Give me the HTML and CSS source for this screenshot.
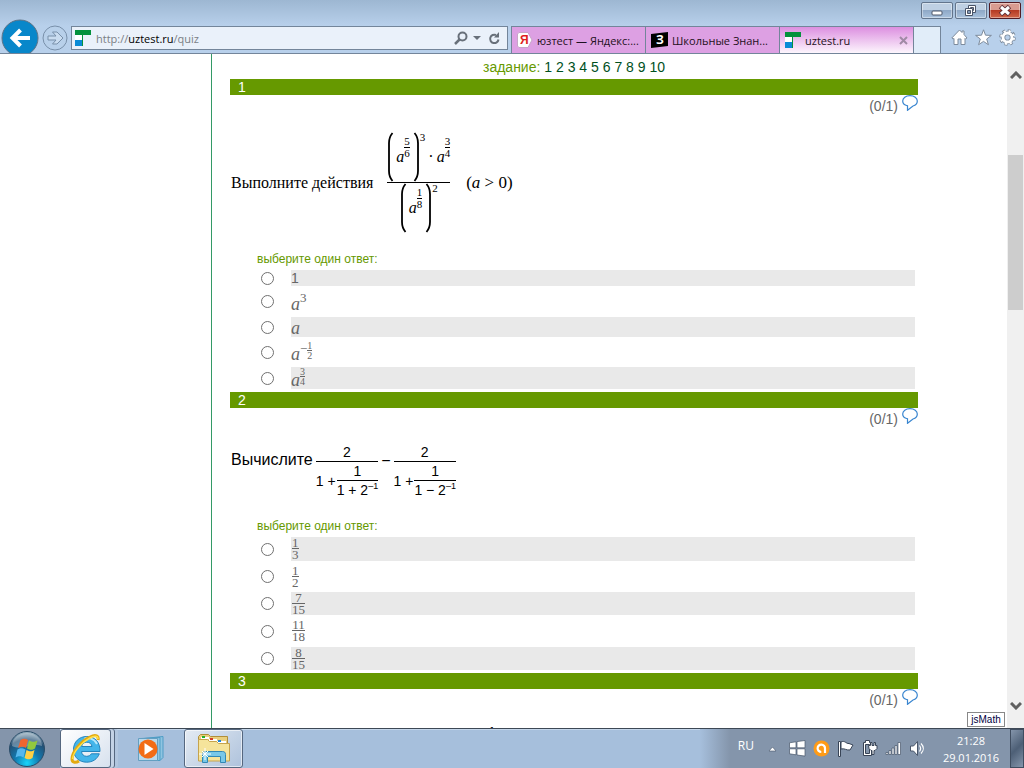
FILE: index.html
```html
<!DOCTYPE html>
<html lang="ru">
<head>
    <meta charset="UTF-8">
    <meta name="viewport" content="width=device-width, initial-scale=1.0">
    <title>uztest.ru</title>
    <link rel="stylesheet" href="styles.css">
</head>
<body>
    <svg class="defs" aria-hidden="true">
        <defs>
            <symbol id="uztest" viewBox="0 0 16 16">
                <path fill="#fff" d="M0 0h16v5H8v11H0z"/>
                <path fill="#04913c" d="M0 0h16v5H0zM7 5h1v11H7z"/>
                <path fill="#0a8bd6" d="M0 10h7v6H0z"/>
            </symbol>
            <symbol id="bubble" viewBox="0 0 16 16">
                <path fill="#fff" stroke="#3a86d0" stroke-width="1.2" d="M4.500 10.500C2 9.700 .7 8 .7 6 .7 3 3.800 .7 8 .7s7.300 2.300 7.300 5.300c0 2.500-1.600 4.300-4.300 5L5.500 15.300V10.800z"/>
            </symbol>
            <symbol id="paren" viewBox="0 0 7 50" preserveAspectRatio="none">
                <path fill="none" stroke="#000" stroke-width="1.800" d="M5.500 1C3 4 2 7 2 11v28c0 4 1 7 3.500 10"/>
            </symbol>
        </defs>
    </svg>

    <!-- Окно браузера -->
    <header class="browser">
        <div class="titlebar">
            <button class="win" aria-label="Свернуть"><svg width="30" height="16"><rect x="10" y="8" width="10" height="4" rx="1" fill="#fff" stroke="#4b5568"/></svg></button>
            <button class="win" aria-label="Восстановить"><svg width="30" height="16" fill="#fff" stroke="#4b5568"><path d="M12.500 2.500h7v7h-7zM14.500 4.500h3v3h-3z"/><path d="M9.500 5.500h7v7h-7z"/><path fill="#8198b5" d="M11.500 7.500h3v3h-3z"/></svg></button>
            <button class="win close" aria-label="Закрыть"><svg width="30" height="16"><path d="M10.500 3.500l9 8M19.500 3.500l-9 8" stroke="#5b2b33" stroke-width="5"/><path d="M11 4l8 7M19 4l-8 7" stroke="#fff" stroke-width="3"/></svg></button>
        </div>
        <div class="navbar">
            <button class="back" aria-label="Назад">
                <svg width="38" height="38" viewBox="0 0 38 38"><circle cx="19" cy="19" r="18" fill="#0887ca" stroke="#5e7387"/><path d="M29 19H13M19.500 11L11.500 19l8 8" fill="none" stroke="#fff" stroke-width="4"/></svg>
            </button>
            <button class="forward" aria-label="Вперёд">
                <svg width="26" height="26" viewBox="0 0 26 26"><circle cx="13" cy="13" r="12" fill="#b8d0ea" stroke="#7990aa"/><path d="M6 11h8l-3.500-4h4.500l6 6-6 6h-4.500l3.500-4H6z" fill="#c9dcf0" stroke="#7990aa"/></svg>
            </button>
            <div class="address">
                <svg width="16" height="16"><use href="#uztest"/></svg>
                <div class="url" role="textbox" aria-label="Адрес" contenteditable="true" spellcheck="false">http://<b>uztest.ru</b>/quiz</div>
                <button aria-label="Поиск"><svg width="14" height="14" fill="none" stroke="#68707a"><circle cx="8.500" cy="5.500" r="4" stroke-width="2"/><path d="M5.500 8.500L1 13" stroke-width="2.500"/></svg></button>
                <button aria-label="Показать список"><svg width="8" height="5"><path fill="#68707a" d="M0 0h8L4 4z"/></svg></button>
                <button class="reload" aria-label="Обновить"><svg width="13" height="13" viewBox="0 0 13 13"><path d="M10.500 7.500a4.200 4.200 0 1 1-2.500-4.500" fill="none" stroke="#68707a" stroke-width="2"/><path fill="#68707a" d="M6 5.500h5V0z"/></svg></button>
            </div>
            <nav class="tabs">
                <a class="tab" href="#">
                    <svg width="16" height="16"><path fill="#fff" stroke="#c6a5c8" d="M2 .5h9l4 7.500-4 7.500H2L.5 14V2z"/><text x="3" y="12" class="ya">Я</text></svg>
                    <span>юзтест — Яндекс:...</span>
                </a>
                <a class="tab" href="#">
                    <svg width="17" height="16"><path d="M0 2L17 0v14L0 16z"/><text x="5" y="12" class="zn">З</text></svg>
                    <span>Школьные Знан...</span>
                </a>
                <a class="tab active" href="#">
                    <svg width="16" height="16"><use href="#uztest"/></svg>
                    <span>uztest.ru</span>
                    <svg class="x" width="9" height="9"><path d="M1 1l7 7M8 1L1 8" stroke="#a08aa5" stroke-width="2"/></svg>
                </a>
                <button class="newtab" aria-label="Новая вкладка"></button>
            </nav>
            <div class="tools">
                <button aria-label="Домой"><svg width="17" height="17" viewBox="0 0 17 17"><path fill="#fff" stroke="#7d8b9c" d="M.8 9L8.500 1l2.500 2.500V2h2v3.500L16 9l-1.500 1-.5-.5V15.500h-4V10H7v5.500H3V9.500l-1 .5z"/></svg></button>
                <button aria-label="Избранное"><svg width="17" height="17" viewBox="0 0 17 17"><path fill="#fff" stroke="#7d8b9c" d="M8.500 .8l2 5.400 5.900.2-4.700 3.600 1.700 5.700-4.900-3.300-4.900 3.300L5.300 10 .6 6.400l5.900-.2z"/></svg></button>
                <button aria-label="Сервис"><svg width="17" height="17" viewBox="0 0 17 17"><circle cx="8.500" cy="8.500" r="6.800" fill="none" stroke="#7d8b9c" stroke-width="3" stroke-dasharray="3 2.340"/><circle cx="8.500" cy="8.500" r="4.500" fill="none" stroke="#7d8b9c" stroke-width="4.500"/><circle cx="8.500" cy="8.500" r="6.500" fill="none" stroke="#fff" stroke-width="2" stroke-dasharray="2.100 3" stroke-dashoffset="-.4"/><circle cx="8.500" cy="8.500" r="4.500" fill="none" stroke="#fff" stroke-width="2.800"/></svg></button>
            </div>
        </div>
    </header>

    <!-- Страница теста -->
    <div class="page">
        <aside class="side"></aside>
        <main class="quiz">
            <nav class="tasks">задание:
                <a href="#q1">1</a> <a href="#q2">2</a> <a href="#q3">3</a> <a href="#q4">4</a> <a href="#q5">5</a> <a href="#q6">6</a> <a href="#q7">7</a> <a href="#q8">8</a> <a href="#q9">9</a> <a href="#q10">10</a>
            </nav>

            <section id="q1">
                <h2>1</h2>
                <div class="score">(0/1) <svg width="16" height="16"><use href="#bubble"/></svg></div>
                <div class="formula serif">
                    <span class="words">Выполните действия</span>
                    <span class="frac main">
                        <span class="term top">
                            <svg width="7" height="50"><use href="#paren"/></svg>
                            <i>a</i>
                            <span class="frac small"><span>5</span><span>6</span></span>
                            <svg class="flip" width="7" height="50"><use href="#paren"/></svg>
                            <span class="exp">3</span>
                            <span class="dot">·</span>
                            <i>a</i>
                            <span class="frac small"><span>3</span><span>4</span></span>
                        </span>
                        <span class="term">
                            <svg width="7" height="50"><use href="#paren"/></svg>
                            <i>a</i>
                            <span class="frac small"><span>1</span><span>8</span></span>
                            <svg class="flip" width="7" height="50"><use href="#paren"/></svg>
                            <span class="exp">2</span>
                        </span>
                    </span>
                    <span class="cond">(<i>a</i> &gt; 0)</span>
                </div>
                <p class="hint">выберите один ответ:</p>
                <ul class="answers">
                    <li class="h16"><input type="radio" name="q1" id="q1a"><label for="q1a">1</label></li>
                    <li class="h23"><input type="radio" name="q1" id="q1b"><label for="q1b" class="math"><i>a</i><span class="pow">3</span></label></li>
                    <li class="h20"><input type="radio" name="q1" id="q1c"><label for="q1c" class="math"><i>a</i></label></li>
                    <li class="h22"><input type="radio" name="q1" id="q1d"><label for="q1d" class="math"><i>a</i><span class="pow">−</span><span class="frac tiny"><span>1</span><span>2</span></span></label></li>
                    <li class="h22"><input type="radio" name="q1" id="q1e"><label for="q1e" class="math"><i>a</i><span class="frac tiny"><span>3</span><span>4</span></span></label></li>
                </ul>
            </section>

            <section id="q2">
                <h2>2</h2>
                <div class="score">(0/1) <svg width="16" height="16"><use href="#bubble"/></svg></div>
                <div class="formula sans">
                    <span class="words">Вычислите</span>
                    <span class="frac wide">
                        <span>2</span>
                        <span class="sum">1 + <span class="frac inner"><span>1</span><span>1 + 2<sup>–1</sup></span></span></span>
                    </span>
                    <span class="minus">−</span>
                    <span class="frac wide">
                        <span>2</span>
                        <span class="sum">1 + <span class="frac inner"><span>1</span><span>1 − 2<sup>–1</sup></span></span></span>
                    </span>
                </div>
                <p class="hint">выберите один ответ:</p>
                <ul class="answers">
                    <li class="h24"><input type="radio" name="q2" id="q2a"><label for="q2a" class="math"><span class="frac answer"><span>1</span><span>3</span></span></label></li>
                    <li class="h23"><input type="radio" name="q2" id="q2b"><label for="q2b" class="math"><span class="frac answer"><span>1</span><span>2</span></span></label></li>
                    <li class="h23"><input type="radio" name="q2" id="q2c"><label for="q2c" class="math"><span class="frac answer"><span>7</span><span>15</span></span></label></li>
                    <li class="h24"><input type="radio" name="q2" id="q2d"><label for="q2d" class="math"><span class="frac answer"><span>11</span><span>18</span></span></label></li>
                    <li class="h23"><input type="radio" name="q2" id="q2e"><label for="q2e" class="math"><span class="frac answer"><span>8</span><span>15</span></span></label></li>
                </ul>
            </section>

            <section id="q3">
                <h2>3</h2>
                <div class="score">(0/1) <svg width="16" height="16"><use href="#bubble"/></svg></div>
                <div class="formula next">1</div>
            </section>
        </main>
        <div class="scrollbar">
            <svg width="12" height="8"><path d="M1 7l5-5 5 5" fill="none" stroke="#606060" stroke-width="3"/></svg>
            <div class="thumb"></div>
            <svg width="12" height="8"><path d="M1 1l5 5 5-5" fill="none" stroke="#606060" stroke-width="3"/></svg>
        </div>
        <button class="jsmath">jsMath</button>
    </div>

    <!-- Панель задач -->
    <footer class="taskbar">
        <button class="start" aria-label="Пуск">
            <svg width="38" height="38" viewBox="0 0 38 38">
                <defs><radialGradient id="orb" cx=".5" cy=".9" r=".9"><stop offset="0" stop-color="#19d5fa"/><stop offset=".4" stop-color="#1278ae"/><stop offset=".75" stop-color="#245074"/><stop offset="1" stop-color="#a9bfcc"/></radialGradient></defs>
                <circle cx="19" cy="19" r="17.500" fill="url(#orb)" stroke="#294c68"/>
                <path d="M4 16a15 13 0 0 1 30 0c-9-4-20 5-30 0z" fill="#fff" opacity=".3"/>
                <path fill="#ee6530" d="M12.500 10c3-2 5-1.500 7.500 0l-2 8c-3-2-5-1.500-8 0z"/>
                <path fill="#91c83e" d="M21 10.500c3 1.500 5 2 8.500 0l-2.500 8c-3 2-5 1.500-8 0z"/>
                <path fill="#55b7ed" d="M9.500 19.500c3-2 5-1.500 8 0l-2 8c-3-2-5-1.500-8 0z"/>
                <path fill="#ffd044" d="M18.500 20c3 1.500 5 2 8 0l-2 8c-3 2-5 1.500-8 0z"/>
            </svg>
        </button>
        <button class="app stacked" aria-label="Internet Explorer">
            <svg width="32" height="32" viewBox="0 0 32 32">
                <path fill="#43b5ea" stroke="#2384bd" d="M30 18.500H11.500c.3 3 2.300 4.800 5 4.800 2.200 0 3.800-.8 4.800-2.500h8c-2 5.300-6.600 8.400-12.600 8.400C9 29.200 3.500 24 3.500 16.500S9 3.500 16.700 3.500c8.300 0 13.500 5.500 13.300 15zM22 13.500c-.5-2.800-2.300-4.300-5.200-4.300s-4.600 1.600-5.200 4.300z"/>
                <path d="M14.500 5.500C18 4.500 24 5 27 11" stroke="#b5e7fa" stroke-width="2" fill="none"/>
                <path d="M28 7c1-4-2-6-8-3C11 8 2 19 2 26c0 4 4 4 7 2" fill="none" stroke="#e3aa10" stroke-width="3"/>
                <path d="M28 6c0-3-3-4-8-1C12 9 3 19 2.500 26" fill="none" stroke="#ffe04a" stroke-width="1.500"/>
            </svg>
        </button>
        <button class="app flat" aria-label="Проигрыватель">
            <svg width="30" height="28" viewBox="0 0 30 28">
                <path fill="#8fc4e1" stroke="#4e9dc5" d="M7 3.500l19-2v21l-3 3H7zM4 3.500l19-1v23H4z"/>
                <path fill="#b9d9ec" stroke="#639fc1" d="M1.500 3.500h19v22h-19z"/>
                <circle cx="11" cy="14" r="9.500" fill="#f26c16"/><path fill="#fff" d="M7.500 8l9 6-9 6z"/>
            </svg>
        </button>
        <button class="app" aria-label="Проводник">
            <svg width="34" height="32" viewBox="0 0 34 32">
                <path fill="#e9cf7d" stroke="#b18e39" d="M1.500 27V3.500l2-2h8l2 2h17V27z"/>
                <path fill="#fff" d="M4 4h8v2H4zM12 6h8v2h-8zM20 8h9v2h-9z"/>
                <path fill="#22b02a" d="M5 3h3v2H5z"/><path fill="#d33e28" d="M13 5h3v2h-3z"/><path fill="#1d86d5" d="M21 7h3v2h-3z"/>
                <path fill="#f5e49b" stroke="#c6a44c" d="M1.500 6.500h9l2 2h7l2 2h11V28h-31z"/>
                <path fill="#78c8e8" stroke="#3188b5" d="M5.500 29.500v-8c0-2 1-3 3-3h17c2 0 3 1 3 3v8h-5v-6h-13v6z"/>
                <path stroke="#fff" d="M8 15v12M2 21h12M5 18l6 6M11 18l-6 6"/>
            </svg>
        </button>
        <div class="tray">
            <span class="lang">RU</span>
            <button class="more" aria-label="Скрытые значки"><svg width="9" height="6"><path d="M1 5l3.500-4L8 5z" fill="#fff" stroke="#48566a" stroke-width=".6"/></svg></button>
            <svg width="17" height="17" viewBox="0 0 17 17" fill="#fff" stroke="#48566a" stroke-width=".7"><path d="M.5 2.800L7 1.800v6H.5zM8 1.600L16 .5v7.300H8zM.5 8.800H7v6l-6.500-1zM8 8.800h8v7.300l-8-1.100z"/></svg>
            <svg width="17" height="17" viewBox="0 0 17 17"><circle cx="8.500" cy="8.500" r="8" fill="#ff9b16"/><path d="M12 13V8.500A3.700 3.700 0 1 0 8.300 12" fill="none" stroke="#fff" stroke-width="2.200"/></svg>
            <svg width="17" height="17" viewBox="0 0 17 17" fill="#fff" stroke="#384456"><path d="M4 2c4-2 5 2 8 1.500l4 1.500-3 5c-4 .5-5-2-9-1z"/><path d="M1.500 1.500h2v15h-2z"/></svg>
            <svg width="17" height="17" viewBox="0 0 17 17" fill="#fff" stroke="#384456"><path d="M2.500 2.500h2v-2h4v2h2v13h-8z"/><path fill="#8495ab" d="M4.500 4.500h4v9h-4z"/><path d="M7.500 5.500h2v-3h1.500v3h2v-3h1.500v3h1.500v3l-2 2h-1v4h-2v-4h-1l-2-2z"/></svg>
            <svg width="17" height="17" viewBox="0 0 17 17" fill="#fff" stroke="#48566a" stroke-width=".7"><path d="M1 12.500h2v2H1zM4 10.500h2v4H4zM7 8h2v6.500H7zM10 5.500h2v9h-2zM13 2.500h2.500v12H13z"/></svg>
            <svg width="17" height="17" viewBox="0 0 17 17" fill="none"><path fill="#fff" stroke="#48566a" d="M1.500 6h3l4-4.500v14L4.500 11h-3z"/><path stroke="#fff" stroke-width="1.200" d="M10.500 5.500c1.500 2 1.500 4 0 6M12 3.500c3 3 3 7 0 10"/></svg>
            <time class="clock" datetime="2016-01-29T21:28">21:28<br>29.01.2016</time>
            <button class="desktop" aria-label="Свернуть все окна"></button>
        </div>
    </footer>
</body>
</html>
```
FILE: styles.css
```css
:root {
    --green: #669900;
    --glass: #b8d0eb;
    --line: #73859a;
    --bar: #a6bfdc;
    --bar-dark: #8495ab;
}

* {
    margin: 0;
    padding: 0;
    box-sizing: border-box;
}

body {
    height: 100vh;
    display: flex;
    flex-direction: column;
    overflow: hidden;
    background: #fff;
    font-family: "Liberation Sans", Arial, sans-serif;
    font-size: 14px;
}

svg {
    display: block;
    flex: none;
}

button {
    border: none;
    background: none;
    font: inherit;
    flex: none;
}

a {
    color: inherit;
    text-decoration: none;
}

.defs {
    position: absolute;
    width: 0;
    height: 0;
}

/* Браузер */
.browser {
    flex: none;
    background: linear-gradient(#9db7d2, var(--glass) 26px);
    border-bottom: 1px solid var(--line);
    font-family: "Open Sans", "Noto Sans", sans-serif;
    font-size: 11px;
    overflow: hidden;
}

.titlebar {
    height: 26px;
    display: flex;
    justify-content: flex-end;
    align-items: flex-start;
    gap: 2px;
    padding: 2px 3px;
}

.win {
    height: 17px;
    border: 1px solid #63758c;
    border-radius: 2px;
    background: linear-gradient(#bfd0e3 45%, #8fa9c7 50%, #a9c2dd);
    box-shadow: inset 0 0 0 1px rgba(255,255,255,0.4);
}

.close {
    border-color: #521b24;
    background: linear-gradient(#d99b90 45%, #b53a24 50%, #d0664a);
}

.navbar {
    height: 27px;
    display: flex;
    align-items: flex-start;
}

.back {
    margin: -7px 3px 0 1px;
}

.forward {
    margin-top: -1px;
}

.address {
    flex: 1;
    height: 24px;
    display: flex;
    align-items: center;
    gap: 5px;
    margin-left: 3px;
    padding: 0 6px 0 3px;
    background: #eaf1fa;
    border: 1px solid var(--line);
}

.url {
    flex: 1;
    color: #7b7f85;
    outline: none;
}

.url b {
    font-weight: 400;
    color: #000;
}

.reload {
    margin-left: 2px;
}

.tabs {
    display: flex;
    margin-left: 3px;
    border: 1px solid var(--line);
    border-bottom: none;
}

.tab {
    width: 134px;
    height: 26px;
    display: flex;
    align-items: center;
    gap: 4px;
    padding: 0 5px;
    background: #dda0e3;
    border-right: 1px solid var(--line);
    white-space: nowrap;
    color: #1d1020;
}

.tab span {
    flex: 1;
}

.tab.active {
    background: linear-gradient(#dc8fe0, #fdf6fd);
}

.ya {
    font: bold 12px "Liberation Sans", sans-serif;
    fill: #e01f1f;
}

.zn {
    font: bold 12px "Open Sans", sans-serif;
    fill: #fff;
}

.newtab {
    width: 26px;
    background: #e1edf9;
}

.tools {
    display: flex;
    gap: 7px;
    padding: 3px 8px 0 10px;
}

/* Страница */
.page {
    flex: 1;
    min-height: 0;
    display: flex;
    position: relative;
}

.side {
    width: 212px;
    flex: none;
    border-right: 1px solid #339966;
}

.quiz {
    flex: 1;
    padding: 5px 89px 0 18px;
    overflow: hidden;
}

.tasks {
    height: 20px;
    line-height: 17px;
    text-align: center;
    color: var(--green);
}

.tasks a {
    color: #00501e;
}

h2 {
    height: 16px;
    line-height: 17px;
    padding-left: 8px;
    background: var(--green);
    color: #fff;
    font-size: 14px;
    font-weight: 400;
}

.score {
    display: flex;
    justify-content: flex-end;
    gap: 4px;
    height: 21px;
    line-height: 22px;
    color: #666;
}

.formula {
    display: flex;
    align-items: center;
    padding: 0 1px;
    color: #000;
}

.frac {
    display: inline-flex;
    flex-direction: column;
    align-items: center;
}

.frac > :first-child {
    border-bottom: 1px solid currentColor;
    align-self: stretch;
    text-align: center;
}

.serif {
    height: 136px;
    padding-bottom: 3px;
    font-family: "Liberation Serif", "Times New Roman", serif;
    font-size: 16px;
    white-space: nowrap;
}

.serif .main {
    margin: 0 16px 0 14px;
}

.term {
    display: flex;
    align-items: flex-start;
    line-height: 16px;
}

.term i {
    padding: 17px 0 0 2px;
}

.small {
    font-size: 11px;
    line-height: 11px;
    padding-top: 4px;
}

.term .flip {
    transform: scaleX(-1);
    margin-left: 3px;
}

.exp {
    font-size: 11px;
    line-height: 11px;
}

.dot {
    padding: 17px 1px 0 3px;
}

.cond {
    font-size: 17px;
}

.sans {
    height: 90px;
    padding-bottom: 6px;
    font-size: 16px;
    line-height: 18px;
}

.sans .words {
    padding-bottom: 22px;
}

.wide {
    font-size: 14px;
    margin-left: 3px;
}

.sum {
    display: flex;
    align-items: center;
    gap: 1px;
}

.inner {
    white-space: nowrap;
}

.inner sup {
    font-size: 9px;
    line-height: 8px;
}

.minus {
    padding: 0 0 20px 3px;
}

.hint {
    padding-left: 27px;
    font-size: 12px;
    line-height: 14px;
    height: 18px;
    color: var(--green);
}

.answers {
    list-style: none;
    display: grid;
    gap: 4px;
    padding: 0 3px 3px 31px;
}

.answers li {
    display: flex;
    align-items: center;
}

.answers input {
    appearance: none;
    width: 13px;
    height: 13px;
    flex: none;
    border: 1px solid #707070;
    border-radius: 50%;
    background: #fff;
}

.answers input:checked {
    background: radial-gradient(#333 3px, #fff 4px);
}

.answers label {
    flex: 1;
    align-self: stretch;
    margin-left: 17px;
    line-height: 16px;
    color: #666;
}

.answers li:nth-child(odd) label {
    background: #e9e9e9;
}

.answers .math {
    display: flex;
    align-items: flex-end;
    font-family: "Liberation Serif", "Times New Roman", serif;
}

.math i {
    font-size: 18px;
    line-height: 18px;
}

.pow {
    align-self: flex-start;
    font-size: 13px;
    line-height: 16px;
}

.math .tiny {
    align-self: flex-start;
    font-size: 10px;
    line-height: 9px;
}

.math .answer {
    align-self: flex-start;
    font-size: 13px;
    line-height: 11px;
    margin-left: 1px;
}

.h16 { height: 16px; }
.h20 { height: 20px; }
.h22 { height: 22px; }
.h23 { height: 23px; }
.h24 { height: 24px; }

.next {
    height: 100px;
    align-items: flex-start;
    padding: 14px 0 0 258px;
}

.scrollbar {
    width: 17px;
    flex: none;
    display: flex;
    flex-direction: column;
    align-items: center;
    justify-content: space-between;
    padding: 17px 0 18px;
    background: #f0f0f0;
}

.thumb {
    width: 15px;
    height: 155px;
    background: #cdcdcd;
    margin-bottom: 316px;
}

.jsmath {
    position: absolute;
    right: 19px;
    bottom: 1px;
    width: 38px;
    height: 15px;
    border: 1px solid #888;
    background: #fff;
    color: #000040;
    font-size: 10px;
    line-height: 12px;
}

/* Панель задач */
.taskbar {
    flex: none;
    height: 40px;
    display: flex;
    border-top: 1px solid #3d4855;
    background: var(--bar);
    box-shadow: inset 0 1px #c5d7eb;
}

.start {
    width: 60px;
    padding-left: 8px;
    background: var(--bar-dark);
}

.app {
    width: 59px;
    display: flex;
    align-items: center;
    justify-content: center;
    border: 1px solid #55677f;
    border-radius: 3px;
    background: linear-gradient(135deg, #e4ebf3, #aec2dc);
    box-shadow: inset 0 0 0 1px rgba(255,255,255,0.6);
}

.stacked {
    width: 51px;
    margin-right: 8px;
    background: linear-gradient(135deg, #fff, #d7e1ee);
    box-shadow: 3px 0 0 #c3d2e5, 4px 0 0 #55677f, 7px 0 0 #b1c6df;
}

.flat {
    width: 65px;
    border: none;
    background: none;
    box-shadow: none;
}

.tray {
    margin-left: auto;
    display: flex;
    align-items: center;
    gap: 7px;
    padding-left: 38px;
    background: linear-gradient(90deg, var(--bar), var(--bar-dark) 30px);
    color: #fff;
    font-family: "Open Sans", "Noto Sans", sans-serif;
    font-size: 12px;
}

.lang {
    padding-bottom: 6px;
    margin-right: 7px;
}

.more {
    margin-right: 5px;
}

.clock {
    margin-left: 10px;
    text-align: center;
    font-size: 11px;
    line-height: 17px;
}

.desktop {
    width: 14px;
    height: 39px;
    margin-left: 4px;
    border: 1px solid #3f4d60;
    background: linear-gradient(135deg, #8495ab, #4d5f76 50%, #8495ab);
}
```
